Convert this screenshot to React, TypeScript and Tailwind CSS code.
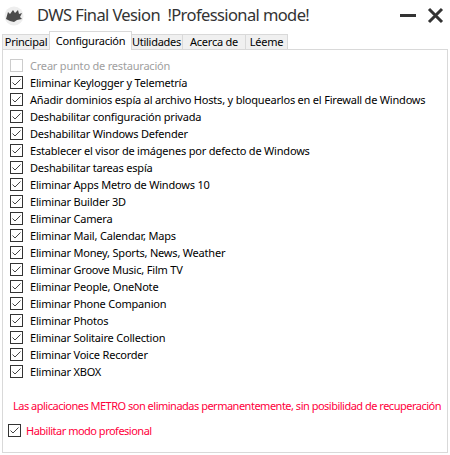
import { type ReactNode } from "react";

const FONT = { fontFamily: '"Noto Sans", "Open Sans", sans-serif' };

const ITEMS = [
  "Eliminar Keylogger y Telemetría",
  "Añadir dominios espía al archivo Hosts, y bloquearlos en el Firewall de Windows",
  "Deshabilitar configuración privada",
  "Deshabilitar Windows Defender",
  "Establecer el visor de imágenes por defecto de Windows",
  "Deshabilitar tareas espía",
  "Eliminar Apps Metro de Windows 10",
  "Eliminar Builder 3D",
  "Eliminar Camera",
  "Eliminar Mail, Calendar, Maps",
  "Eliminar Money, Sports, News, Weather",
  "Eliminar Groove Music, Film TV",
  "Eliminar People, OneNote",
  "Eliminar Phone Companion",
  "Eliminar Photos",
  "Eliminar Solitaire Collection",
  "Eliminar Voice Recorder",
  "Eliminar XBOX",
];

const TABS = [
  { label: "Principal", w: "w-[48px]" },
  { label: "Configuración", w: "w-[83px]" },
  { label: "Utilidades", w: "w-[52px]" },
  { label: "Acerca de", w: "w-[63px]" },
  { label: "Léeme", w: "w-[42px]" },
];

function Box({ checked, disabled }: { checked: boolean; disabled?: boolean }) {
  return (
    <span
      className={`grid h-[13px] w-[13px] shrink-0 place-items-center border bg-white ${
        disabled ? "border-[#cccccc]" : "border-[#333333]"
      }`}
    >
      {checked && (
        <svg width="11" height="11" viewBox="0 0 11 11">
          <path d="M1.5 5.5 L4 8 L9.5 2.5" fill="none" stroke="#444444" strokeWidth="1" />
        </svg>
      )}
    </span>
  );
}

function Row({ children, checked = true, disabled }: { children: ReactNode; checked?: boolean; disabled?: boolean }) {
  return (
    <div className="flex h-[17px] items-center gap-[7px]">
      <Box checked={checked} disabled={disabled} />
      <span
        className={`whitespace-nowrap text-[11px] leading-none tracking-[-0.2px] ${
          disabled ? "text-[#a0a0a0]" : "text-black"
        }`}
      >
        {children}
      </span>
    </div>
  );
}

function Logo() {
  return (
    <svg width="22" height="20" viewBox="0 0 22 20">
      <circle cx="11" cy="10" r="9.5" fill="#eeeeee" />
      <path
        d="M3 13 L5 6 L7 8 L10 4 L12 7 L15 4 L16 8 L19 7 L17 11 L19 13 L14 14 L11 16 L7 15 Z"
        fill="#4a4a4a"
      />
    </svg>
  );
}

export default function App() {
  return (
    <div className="h-[455px] w-[450px] overflow-hidden bg-white text-black" style={FONT}>
      {/* Title bar */}
      <div className="flex h-[31px] items-center pl-[3px] pr-[6px]">
        <Logo />
        <span className="ml-[12px] whitespace-nowrap text-[16.5px] tracking-[-0.6px] text-[#333333]">
          DWS Final Vesion&nbsp;&nbsp;!Professional mode!
        </span>
        <div className="ml-auto flex items-center gap-[11px]">
          <span className="block h-[3px] w-[16px] bg-[#333333]" />
          <svg width="17" height="17" viewBox="0 0 17 17">
            <path d="M2 2 L15 15 M15 2 L2 15" stroke="#333333" strokeWidth="3" />
          </svg>
        </div>
      </div>

      {/* Tabs */}
      <div className="flex h-[18px] items-end pl-[2px] text-[11px] tracking-[-0.25px]">
        {TABS.map((t, i) =>
          i === 1 ? (
            <div
              key={t.label}
              className={`relative z-10 -mx-[1px] -mb-px flex h-[19px] justify-center border border-b-0 border-[#d9d9d9] bg-white pt-[1px] ${t.w}`}
            >
              {t.label}
            </div>
          ) : (
            <div
              key={t.label}
              className={`flex h-[15px] items-center justify-center border border-b-0 border-l-0 border-[#d9d9d9] bg-[#f0f0f0] first:border-l ${t.w}`}
            >
              {t.label}
            </div>
          )
        )}
      </div>

      {/* Panel */}
      <div className="mx-[2px] h-[404px] border border-[#d9d9d9] bg-white pl-[7px] pt-[7px]">
        <Row checked={false} disabled>
          Crear punto de restauración
        </Row>
        {ITEMS.map((t) => (
          <Row key={t}>{t}</Row>
        ))}
        <p className="mt-[18px] whitespace-nowrap pl-[3px] text-[11px] leading-[15px] tracking-[-0.5px] text-[#ff003c]">
          Las aplicaciones METRO son eliminadas permanentemente, sin posibilidad de recuperación
        </p>
        <div className="-ml-[2px] mt-[11px] flex items-center gap-[5px]">
          <Box checked />
          <span className="whitespace-nowrap text-[11px] leading-none tracking-[-0.5px] text-[#ff003c]">
            Habilitar modo profesional
          </span>
        </div>
      </div>
    </div>
  );
}
